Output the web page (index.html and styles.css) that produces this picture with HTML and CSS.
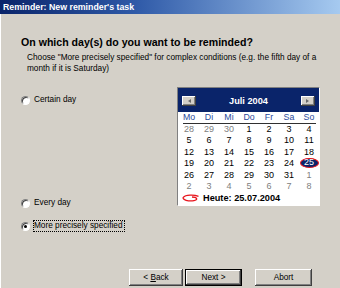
FILE: index.html
```html
<!DOCTYPE html>
<html>
<head>
<meta charset="utf-8">
<link rel="stylesheet" href="styles.css">
</head>
<body>
<div class="window">
  <div class="titlebar">Reminder: New reminder's task</div>
  <div class="content">
    <h1 class="heading">On which day(s) do you want to be reminded?</h1>
    <p class="desc">Choose "More precisely specified" for complex conditions (e.g. the fifth day of a<br>month if it is Saturday)</p>
    <div class="main">
      <div class="options">
        <div class="option opt-certain"><span class="radio"></span><span class="label">Certain day</span></div>
        <div class="option opt-every"><span class="radio"></span><span class="label">Every day</span></div>
        <div class="option opt-more"><span class="radio checked"></span><span class="label focus">More precisely specified</span></div>
      </div>
      <div class="calendar">
        <div class="cal-head">
          <span class="nav"><i class="arrow-left"></i></span>
          <span class="month">Juli 2004</span>
          <span class="nav"><i class="arrow-right"></i></span>
        </div>
        <div class="weekdays"><span>Mo</span><span>Di</span><span>Mi</span><span>Do</span><span>Fr</span><span>Sa</span><span>So</span></div>
        <div class="rule"></div>
        <div class="days">
          <span class="other">28</span><span class="other">29</span><span class="other">30</span><span>1</span><span>2</span><span>3</span><span>4</span>
          <span>5</span><span>6</span><span>7</span><span>8</span><span>9</span><span>10</span><span>11</span>
          <span>12</span><span>13</span><span>14</span><span>15</span><span>16</span><span>17</span><span>18</span>
          <span>19</span><span>20</span><span>21</span><span>22</span><span>23</span><span>24</span><span><b class="sel">25</b></span>
          <span>26</span><span>27</span><span>28</span><span>29</span><span>30</span><span>31</span><span class="other">1</span>
          <span class="other">2</span><span class="other">3</span><span class="other">4</span><span class="other">5</span><span class="other">6</span><span class="other">7</span><span class="other">8</span>
        </div>
        <div class="today">
          <svg class="loop" width="17" height="8" viewBox="0 0 17 8"><path d="M16.5 2.3 C12 0.4 3.5 0.6 1.3 3.3 C0 5.8 6.5 7.6 12 6.6 C16 5.8 15.5 3.2 10 3" fill="none" stroke="#e8141c" stroke-width="1.3"/></svg>
          <span>Heute: 25.07.2004</span>
        </div>
      </div>
    </div>
    <div class="buttons">
      <span class="btn btn-back"><span>&lt; <u>B</u>ack</span></span>
      <span class="btn btn-next"><span>Next &gt;</span></span>
      <span class="btn btn-abort"><span>Abort</span></span>
    </div>
  </div>
</div>
</body>
</html>
```

FILE: styles.css
```css
* { box-sizing: border-box; margin: 0; padding: 0; }
body { margin: 0; background: #d4d0c8; font-family: "Liberation Sans", Arial, sans-serif; color: #000; }
.window { width: 340px; height: 288px; background: #d4d0c8; display: flex; flex-direction: column; overflow: hidden; }
.titlebar { height: 14px; line-height: 14px; padding-left: 3px; color: #fff; font-weight: bold; font-size: 8.8px; white-space: nowrap; background: linear-gradient(to right, #0a246a, #2f5aa8 40%, #a6caf0); }
.content { flex: 1; display: flex; flex-direction: column; border-left: 1px solid #fff; }
.heading { font-size: 10.6px; font-weight: bold; line-height: 13px; margin-top: 21.5px; padding-left: 20px; white-space: nowrap; }
.desc { font-size: 8.25px; line-height: 11px; margin-top: 3px; padding-left: 26px; white-space: nowrap; }
.main { display: flex; margin-top: 13.5px; }
.options { width: 176px; padding-left: 20px; display: flex; flex-direction: column; }
.option { display: flex; align-items: center; height: 12px; gap: 3px; font-size: 8.25px; white-space: nowrap; }
.opt-certain { margin-top: 7px; }
.opt-every { margin-top: 91px; }
.opt-more { margin-top: 11px; }
.radio { width: 9px; height: 9px; border-radius: 50%; background: #fff; border: 1px solid; border-color: #808080 #fff #fff #808080; box-shadow: inset 1px 1px 0 #404040; position: relative; flex: none; }
.radio.checked::after { content: ""; position: absolute; left: 2px; top: 2px; width: 3px; height: 3px; border-radius: 50%; background: #000; }
.label { border: 1px solid transparent; height: 12px; line-height: 10px; padding-right: 1px; }
.label.focus { border: 1px dotted #000; }
.calendar { width: 143px; height: 119px; background: #fff; border: 1px solid; border-color: #808080 #fff #fff #808080; display: flex; flex-direction: column; }
.cal-head { height: 24px; background: #0a246a; display: flex; align-items: center; justify-content: space-between; padding: 2px 4px 0 4px; }
.month { color: #fff; font-weight: bold; font-size: 9.2px; }
.nav { width: 14px; height: 10px; background: #d4d0c8; box-shadow: inset -1px -1px 0 #404040, inset 1px 1px 0 #fff, inset -2px -2px 0 #808080; display: flex; align-items: center; justify-content: center; }
.arrow-left { width: 0; height: 0; border-top: 2.5px solid transparent; border-bottom: 2.5px solid transparent; border-right: 3px solid #6a6a6a; }
.arrow-right { width: 0; height: 0; border-top: 2.5px solid transparent; border-bottom: 2.5px solid transparent; border-left: 3px solid #6a6a6a; }
.weekdays { display: grid; grid-template-columns: repeat(7, 20px); padding-left: 1px; height: 11px; line-height: 11px; font-size: 8.8px; color: #2a4a9a; text-align: center; }
.rule { height: 1px; background: #303030; margin: 0 3px 0 5px; flex: none; }
.days { display: grid; grid-template-columns: repeat(7, 20px); grid-auto-rows: 11.4px; padding-left: 1px; font-size: 9px; line-height: 11.4px; text-align: center; }
.days .other { color: #808080; }
.sel { display: inline-block; width: 19px; height: 10px; line-height: 7px; border-radius: 50%; background: #0a246a; color: #fff; border: 1.5px solid #e8141c; font-weight: normal; vertical-align: middle; margin-top: -1px; }
.today { display: flex; align-items: center; height: 12px; padding-left: 4px; gap: 4px; font-weight: bold; font-size: 9.2px; white-space: nowrap; }
.loop { flex: none; }
.buttons { margin-top: auto; display: flex; justify-content: flex-end; padding: 0 28px 2px 0; }
.btn { height: 17px; display: flex; align-items: center; justify-content: center; font-size: 8.25px; white-space: pre; background: #d4d0c8; box-shadow: inset -1px -1px 0 #404040, inset 1px 1px 0 #fff, inset -2px -2px 0 #808080; }
.btn-back { width: 54px; margin-right: 2px; }
.btn-next { width: 57px; border: 1px solid #000; }
.btn-abort { width: 57px; margin-left: 13px; }
```
